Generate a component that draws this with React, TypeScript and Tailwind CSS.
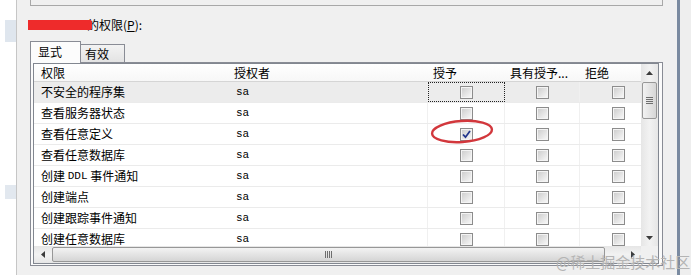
const CJK = "font-['Noto_Sans_CJK_SC','Noto_Sans',sans-serif]"
const MONO = "font-['Liberation_Mono',monospace]"

const ROWS = [
  { name: '不安全的程序集', grant: false },
  { name: '查看服务器状态', grant: false },
  { name: '查看任意定义', grant: true },
  { name: '查看任意数据库', grant: false },
  { name: 'DDL', grant: false },
  { name: '创建端点', grant: false },
  { name: '创建跟踪事件通知', grant: false },
  { name: '创建任意数据库', grant: false },
]

function CheckBox({ checked }: { checked?: boolean }) {
  return (
    <div className="w-[13px] h-[13px] border border-[#8c8c8c] bg-[#f4f4f4] p-[1px]">
      <div className="w-full h-full bg-gradient-to-br from-[#cfcfcf] to-[#f6f6f6] flex items-center justify-center">
        {checked && (
          <svg width="9" height="9" viewBox="0 0 9 9">
            <path d="M1 4.5 L3.5 7.2 L8 1" fill="none" stroke="#22358c" strokeWidth="1.8" />
          </svg>
        )}
      </div>
    </div>
  )
}

function Arrow({ dir }: { dir: 'up' | 'down' | 'left' | 'right' }) {
  const d = {
    up: 'M0 4 L3.5 0 L7 4 Z',
    down: 'M0 0 L7 0 L3.5 4 Z',
    left: 'M4 0 L4 7 L0 3.5 Z',
    right: 'M0 0 L4 3.5 L0 7 Z',
  }[dir]
  const vertical = dir === 'up' || dir === 'down'
  return (
    <svg width={vertical ? 7 : 4} height={vertical ? 4 : 7} viewBox={vertical ? '0 0 7 4' : '0 0 4 7'}>
      <path d={d} fill="#3c3c3c" />
    </svg>
  )
}

export default function App() {
  return (
    <div className={`relative w-[691px] h-[275px] flex bg-white overflow-hidden text-black ${CJK}`}>
      {/* left edge of the window behind */}
      <div className="w-[16px] flex flex-col">
        <div className="mt-[20px] ml-[5px] h-[22px] bg-[#dfe6ee]" />
        <div className="mt-[143px] ml-[5px] h-[14px] bg-[#e2e8ef]" />
      </div>

      {/* dialog */}
      <div className="w-[661px] border-l border-[#c6c6c6] bg-[#f0f0f0] flex flex-col">
        <div className="ml-[13px] w-[633px] h-[6px] border-x border-b border-[#a8a8a8]" />

        {/* label */}
        <div className="mt-[12px] ml-[11px] h-[14px] flex items-center text-[12px] leading-[14px]">
          <div className="relative z-10 w-[64px] h-[10px] bg-[#ee2b2b] rounded-r-[2px]" />
          <span className="-ml-[5px]">的权限(<span className="underline">P</span>):</span>
        </div>

        {/* tabs */}
        <div className="mt-[9px] ml-[13px] h-[21px] flex items-end text-[12px] leading-[14px]">
          <div className="relative z-10 w-[51px] h-[22px] -mb-[1px] border-x border-t border-[#898c95] bg-[#fcfcfc] pl-[7px] pt-[3px]">
            显式
          </div>
          <div className="w-[44px] h-[18px] border-t border-r border-[#898c95] bg-gradient-to-b from-[#f3f3f3] to-[#e3e3e3] pl-[4px] pt-[2px]">
            有效
          </div>
        </div>

        {/* tab panel */}
        <div className="ml-[13px] w-[633px] h-[204px] border border-[#898c95] bg-[#fbfbfb] pl-[2px] pr-[3px] pb-[1px] flex">
          <div className="flex-1 border border-[#828790] bg-white flex flex-col">
            <div className="h-[182px] flex">
              {/* table */}
              <div className="w-[607px] overflow-hidden flex flex-col">
                <div className="h-[18px] flex text-[12px] leading-[14px] border-b border-[#d5d5d5] bg-gradient-to-b from-white to-[#f7f7f7] shrink-0">
                  <div className="w-[195px] shrink-0 pl-[7px] flex items-center">权限</div>
                  <div className="w-[199px] shrink-0 pl-[5px] flex items-center">授权者</div>
                  <div className="w-[77px] shrink-0 pl-[5px] flex items-center">授予</div>
                  <div className="w-[75px] shrink-0 pl-[5px] flex items-center">具有授予...</div>
                  <div className="w-[76px] shrink-0 pl-[5px] flex items-center">拒绝</div>
                </div>
                {ROWS.map((r, i) => (
                  <div
                    key={i}
                    className={`h-[21px] shrink-0 flex text-[12px] leading-[14px] border-b border-[#ebebeb] ${i === 0 ? 'bg-[#ececec]' : ''}`}
                  >
                    <div className="w-[195px] shrink-0 pl-[7px] flex items-center">
                      {r.name === 'DDL' ? (
                        <>
                          创建&nbsp;<span className={`${MONO} text-[11px]`}>DDL</span>&nbsp;事件通知
                        </>
                      ) : (
                        r.name
                      )}
                    </div>
                    <div className={`w-[199px] shrink-0 pl-[7px] flex items-center border-r border-[#f0f0f0] ${MONO} text-[11px]`}>
                      sa
                    </div>
                    <div
                      className={`w-[77px] shrink-0 flex items-center justify-center border-r ${
                        i === 0 ? 'border border-dotted border-[#222]' : 'border-[#f0f0f0]'
                      }`}
                    >
                      <CheckBox checked={r.grant} />
                    </div>
                    <div className="w-[75px] shrink-0 flex items-center justify-center border-r border-[#f0f0f0]">
                      <CheckBox />
                    </div>
                    <div className="w-[76px] shrink-0 flex items-center justify-center">
                      <CheckBox />
                    </div>
                  </div>
                ))}
              </div>

              {/* vertical scrollbar */}
              <div className="w-[17px] flex flex-col bg-gradient-to-r from-[#e6e6e6] via-[#f2f2f2] to-[#e6e6e6]">
                <div className="h-[17px] flex items-center justify-center">
                  <Arrow dir="up" />
                </div>
                <div className="mt-[1px] mx-[1px] h-[37px] rounded-[2px] border border-[#979797] bg-gradient-to-r from-[#f2f2f2] to-[#d6d6d6] flex flex-col items-center justify-center gap-[1px]">
                  <div className="w-[7px] h-[1px] bg-[#6e6e6e]" />
                  <div className="w-[7px] h-[1px] bg-[#6e6e6e]" />
                  <div className="w-[7px] h-[1px] bg-[#6e6e6e]" />
                  <div className="w-[7px] h-[1px] bg-[#6e6e6e]" />
                </div>
                <div className="flex-1" />
                <div className="h-[17px] flex items-center justify-center">
                  <Arrow dir="down" />
                </div>
              </div>
            </div>

            {/* horizontal scrollbar */}
            <div className="h-[17px] flex">
              <div className="w-[607px] flex bg-gradient-to-b from-[#e6e6e6] via-[#f2f2f2] to-[#e6e6e6]">
                <div className="w-[17px] flex items-center justify-center">
                  <Arrow dir="left" />
                </div>
                <div className="ml-[1px] my-[1px] w-[553px] rounded-[2px] border border-[#979797] bg-gradient-to-b from-[#f3f3f3] to-[#d5d5d5] flex items-center justify-center gap-[1px]">
                  <div className="w-[1px] h-[7px] bg-[#6e6e6e]" />
                  <div className="w-[1px] h-[7px] bg-[#6e6e6e]" />
                  <div className="w-[1px] h-[7px] bg-[#6e6e6e]" />
                  <div className="w-[1px] h-[7px] bg-[#6e6e6e]" />
                </div>
                <div className="flex-1" />
                <div className="w-[17px] flex items-center justify-center">
                  <Arrow dir="right" />
                </div>
              </div>
              <div className="flex-1 bg-[#f0f0f0]" />
            </div>
          </div>
        </div>
      </div>

      {/* right edge */}
      <div className="w-[3px] bg-[#7a8aa0]" />
      <div className="flex-1 bg-[#eeeeee]" />

      {/* red annotation */}
      <svg className="absolute left-[429px] top-[118px]" width="66" height="28" viewBox="0 0 66 28">
        <ellipse cx="33" cy="13.5" rx="30" ry="10.5" fill="none" stroke="#d2373c" strokeWidth="2.4" transform="rotate(-4 33 13.5)" />
      </svg>

      {/* watermark */}
      <div className="absolute left-[556px] top-[252px] text-[15px] leading-[20px] text-[#b4b4b4] whitespace-nowrap">
        @稀土掘金技术社区
      </div>
    </div>
  )
}
